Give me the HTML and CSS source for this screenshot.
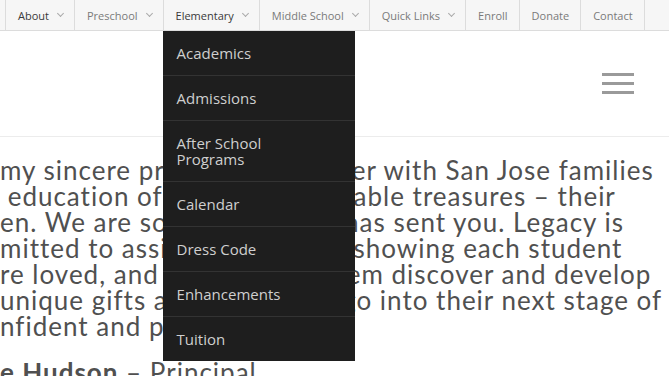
FILE: index.html
```html
<!DOCTYPE html>
<html lang="en">
  <head>
    <meta charset="UTF-8" />
    <meta name="viewport" content="width=device-width, initial-scale=1.0" />
    <title>Legacy - Elementary</title>
    <link rel="stylesheet" href="styles.css">
  </head>
  <body>
    <div class="topbar">
      <ul class="menu">
        <li class="item dark">About <span class="caret"></span></li>
        <li class="item">Preschool <span class="caret"></span></li>
        <li class="item dark">Elementary <span class="caret"></span>
          <ul class="dropdown">
            <li>Academics</li>
            <li>Admissions</li>
            <li>After School<br>Programs</li>
            <li>Calendar</li>
            <li>Dress Code</li>
            <li>Enhancements</li>
            <li>Tuition</li>
          </ul>
        </li>
        <li class="item">Middle School <span class="caret"></span></li>
        <li class="item">Quick Links <span class="caret"></span></li>
        <li class="item">Enroll</li>
        <li class="item">Donate</li>
        <li class="item">Contact</li>
      </ul>
    </div>

    <div class="header">
      <div class="burger">
        <span></span>
        <span></span>
        <span></span>
      </div>
    </div>

    <div class="content">
      <p class="welcome">
        my sincere privilege to partner with San Jose families<br>
        &nbsp;education of their most valuable treasures – their<br>
        en. We are so thankful God has sent you. Legacy is<br>
        mitted to assist your kids by showing each student<br>
        re loved, and also helping them discover and develop<br>
        unique gifts and prepare to go into their next stage of<br>
        nfident and prepared.
      </p>
      <p class="sign"><strong>e Hudson</strong> – Principal</p>
    </div>
  </body>
</html>
```

FILE: styles.css
```css
body {
  margin: 0;
  font-family: "Open Sans", "Liberation Sans", sans-serif;
  background: #fff;
  overflow: hidden;
}
.topbar {
  background: #f6f6f6;
  border-bottom: 1px solid #dcdcdc;
  height: 30px;
  position: relative;
  z-index: 5;
}
.menu {
  list-style: none;
  margin: 0;
  padding: 0 0 0 5px;
  display: flex;
  height: 30px;
}
.item {
  position: relative;
  display: flex;
  align-items: center;
  padding: 0 11px 0 12px;
  border-left: 1px solid #dcdcdc;
  font-size: 11px;
  color: #7a7a7a;
  white-space: nowrap;
}
.item:last-child {
  border-right: 1px solid #dcdcdc;
}
.item.dark {
  color: #3a3a3a;
}
.caret {
  display: inline-block;
  width: 4px;
  height: 4px;
  margin: -3px 0 0 9px;
  border-right: 1px solid #aaa;
  border-bottom: 1px solid #aaa;
  transform: rotate(45deg);
}
.dropdown {
  position: absolute;
  top: 31px;
  left: -1px;
  width: 192px;
  margin: 0;
  padding: 0;
  list-style: none;
  background: #1e1e1e;
}
.dropdown li {
  padding: 14px 14px;
  font-size: 15px;
  line-height: 16px;
  color: #cfcfcf;
  border-bottom: 1px solid #333;
}
.dropdown li:last-child {
  border-bottom: none;
}
.header {
  height: 105px;
  border-bottom: 1px solid #ececec;
  display: flex;
  justify-content: flex-end;
  align-items: center;
  padding-right: 35px;
}
.burger {
  display: flex;
  flex-direction: column;
  gap: 6px;
}
.burger span {
  display: block;
  width: 32px;
  height: 3px;
  background: #9a9a9a;
}
.content {
  font-family: Lato, "Open Sans", sans-serif;
  color: #505050;
  font-size: 26px;
  letter-spacing: 1px;
  line-height: 26px;
  white-space: nowrap;
}
.welcome {
  margin: 20px 0 0 0;
}
.sign {
  margin: 20px 0 0 0;
}
.sign strong {
  font-weight: 700;
}
```
